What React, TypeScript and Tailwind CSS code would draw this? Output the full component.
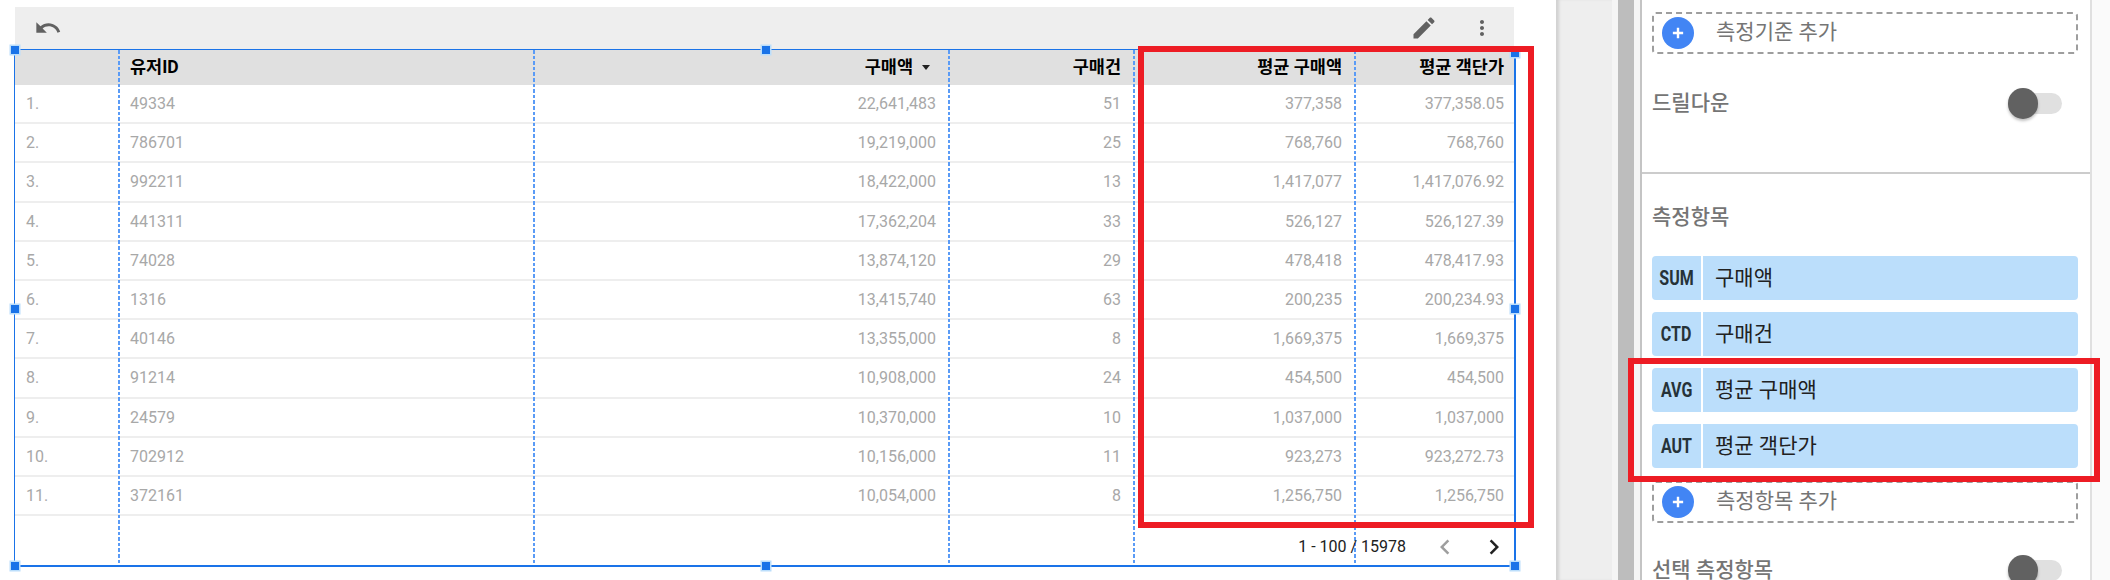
const COLUMNS = [
  { label: "", width: "w-[105px]", align: "left", pad: "pl-[11px]", values: ["1.", "2.", "3.", "4.", "5.", "6.", "7.", "8.", "9.", "10.", "11."] },
  { label: "유저ID", width: "w-[415px]", align: "left", pad: "pl-[10px]", values: ["49334", "786701", "992211", "441311", "74028", "1316", "40146", "91214", "24579", "702912", "372161"] },
  { label: "구매액", width: "w-[415px]", align: "right", pad: "pr-[14px]", sorted: true, values: ["22,641,483", "19,219,000", "18,422,000", "17,362,204", "13,874,120", "13,415,740", "13,355,000", "10,908,000", "10,370,000", "10,156,000", "10,054,000"] },
  { label: "구매건", width: "w-[185px]", align: "right", pad: "pr-[14px]", values: ["51", "25", "13", "33", "29", "63", "8", "24", "10", "11", "8"] },
  { label: "평균 구매액", width: "w-[221px]", align: "right", pad: "pr-[14px]", values: ["377,358", "768,760", "1,417,077", "526,127", "478,418", "200,235", "1,669,375", "454,500", "1,037,000", "923,273", "1,256,750"] },
  { label: "평균 객단가", width: "w-[158px]", align: "right", pad: "pr-[10px]", last: true, values: ["377,358.05", "768,760", "1,417,076.92", "526,127.39", "478,417.93", "200,234.93", "1,669,375", "454,500", "1,037,000", "923,272.73", "1,256,750"] },
];

const METRICS = [
  { agg: "SUM", name: "구매액" },
  { agg: "CTD", name: "구매건" },
  { agg: "AVG", name: "평균 구매액" },
  { agg: "AUT", name: "평균 객단가" },
];

function MaterialIcon({ d, size, className }: { d: string; size: number; className?: string }) {
  return (
    <svg viewBox="0 0 24 24" width={size} height={size} className={className} fill="currentColor">
      <path d={d} />
    </svg>
  );
}

function Handle({ className }: { className: string }) {
  return <div className={`absolute h-[8px] w-[8px] bg-[#1a73e8] shadow-[0_0_0_1.5px_#bbdefb] ${className}`} />;
}

function Toggle() {
  return (
    <div className="relative h-[21px] w-[39px] rounded-full bg-[#e0e0e0]">
      <div className="absolute left-[-15px] top-[-5px] h-[31px] w-[30px] rounded-full bg-[#616161] shadow-[0_2px_3px_rgba(0,0,0,0.25)]" />
    </div>
  );
}

function AddBox({ label, className }: { label: string; className: string }) {
  return (
    <div className={`flex h-[42px] items-center rounded-[4px] border-2 border-dashed border-[#9e9e9e] pl-[8px] ${className}`}>
      <div className="flex h-[32px] w-[32px] items-center justify-center rounded-full bg-[#4285f4]">
        <svg viewBox="0 0 14 14" width={12} height={12} fill="none" stroke="white" strokeWidth="2.8">
          <path d="M7 1v12M1 7h12" />
        </svg>
      </div>
      <span className="ml-[22px] pb-[2px] text-[21px] leading-[30px] text-[#757575]">{label}</span>
    </div>
  );
}

export default function App() {
  return (
    <div className="flex h-[580px] w-[2110px] overflow-hidden bg-white font-['Roboto','Noto_Sans_CJK_KR',sans-serif]">
      {/* report canvas */}
      <div className="relative w-[1556px] shrink-0 pl-[14px] pt-[7px]">
        <div className="ml-[1px] flex h-[42px] w-[1499px] items-center justify-between bg-[#eeeeee] pl-[19px] pr-[20px] text-[#616161]">
          <MaterialIcon size={28} d="M12.5 8c-2.65 0-5.05.99-6.9 2.6L2 7v9h9l-3.62-3.62c1.39-1.16 3.16-1.88 5.12-1.88 3.54 0 6.55 2.31 7.6 5.5l2.37-.78C21.08 11.03 17.15 8 12.5 8z" />
          <div className="flex items-center gap-[32px]">
            <MaterialIcon size={28} d="M3 17.25V21h3.75L17.81 9.94l-3.75-3.75L3 17.25zM20.71 7.04c.39-.39.39-1.02 0-1.41l-2.34-2.34c-.39-.39-1.02-.39-1.41 0l-1.83 1.83 3.75 3.75 1.83-1.83z" />
            <MaterialIcon size={24} d="M12 8c1.1 0 2-.9 2-2s-.9-2-2-2-2 .9-2 2 .9 2 2 2zm0 2c-1.1 0-2 .9-2 2s.9 2 2 2 2-.9 2-2-.9-2-2-2zm0 6c-1.1 0-2 .9-2 2s.9 2 2 2 2-.9 2-2-.9-2-2-2z" />
          </div>
        </div>

        <div className="relative flex h-[518px] w-[1502px] border-b-2 border-l border-r-2 border-t border-[#1a73e8]">
          {COLUMNS.map((col) => (
            <div key={col.label} className={`${col.width} relative h-full shrink-0`}>
              <div
                className={`flex h-[35px] items-center bg-[#e0e0e0] text-[17.5px] font-bold text-black ${col.sorted ? "pr-[20px]" : col.pad} ${col.align === "right" ? "justify-end" : ""}`}
              >
                {col.label}
                {col.sorted && (
                  <svg viewBox="0 0 8 5" width={8} height={5} className="ml-[9px]">
                    <path d="M0 0h8L4 5z" fill="#212121" />
                  </svg>
                )}
              </div>
              {col.values.map((value, i) => (
                <div
                  key={i}
                  className={`flex h-[39.2px] items-center border-b-2 border-[#eeeeee] pt-[1px] text-[16px] text-[#a8a8a8] ${col.pad} ${col.align === "right" ? "justify-end" : ""}`}
                >
                  {value}
                </div>
              ))}
              {/* dashed resize guide on the column edge */}
              {!col.last && (
                <div className="absolute bottom-0 right-0 top-0 w-[2px] bg-[repeating-linear-gradient(to_bottom,#5a9bf6_0,#5a9bf6_3.6px,transparent_3.6px,transparent_5.6px)]" />
              )}
            </div>
          ))}

          {/* pagination */}
          <div className="absolute bottom-[3px] right-[5px] flex items-center text-[16px] text-[#212121]">
            <span className="mr-[24px]">1 - 100 / 15978</span>
            <MaterialIcon size={30} className="text-[#9e9e9e]" d="M15.41 7.41L14 6l-6 6 6 6 1.41-1.41L10.83 12z" />
            <MaterialIcon size={30} className="ml-[19px] text-[#212121]" d="M10 6L8.59 7.41 13.17 12l-4.58 4.59L10 18l6-6z" />
          </div>

          <Handle className="left-[-4px] top-[-4px]" />
          <Handle className="left-[747px] top-[-4px]" />
          <Handle className="right-[-5px] top-[-1px]" />
          <Handle className="left-[-4px] top-[255px]" />
          <Handle className="right-[-5px] top-[255px]" />
          <Handle className="bottom-[-5px] left-[-4px]" />
          <Handle className="bottom-[-5px] left-[747px]" />
          <Handle className="bottom-[-5px] right-[-5px]" />
        </div>

        {/* annotation over the average columns */}
        <div className="absolute left-[1138px] top-[46px] h-[482px] w-[396px] border-[6px] border-[#ed1c24]" />
      </div>

      {/* gutter between canvas and properties panel */}
      <div className="w-[56px] shrink-0 bg-[#eeeeee] shadow-[inset_4px_0_3px_-1px_rgba(0,0,0,0.12)]" />
      <div className="w-[6px] shrink-0 bg-[#f5f5f5]" />
      <div className="w-[16px] shrink-0 bg-[#bdbdbd]" />
      <div className="w-[6px] shrink-0 bg-[#f5f5f5]" />

      {/* properties panel */}
      <div className="relative w-[452px] shrink-0 border-l-2 border-r-2 border-l-[#c4c4c4] border-r-[#e0e0e0]">
        <div className="pl-[10px] pr-[12px] pt-[12px]">
          <AddBox label="측정기준 추가" className="" />
          <div className="mt-[34px] flex h-[30px] items-center justify-between pr-[16px]">
            <span className="text-[21px] font-medium leading-[30px] text-[#757575]">드릴다운</span>
            <Toggle />
          </div>
        </div>

        <div className="mt-[54px] border-t-2 border-[#cccccc]" />

        <div className="pl-[10px] pr-[12px]">
          <div className="pt-[28px] text-[21px] font-medium leading-[30px] text-[#757575]">측정항목</div>
          <div className="mt-[24px] flex flex-col gap-[12px]">
            {METRICS.map((m) => (
              <div key={m.agg} className="flex h-[44px] overflow-hidden rounded-[4px] bg-[#bbdefb]">
                <div className="flex w-[51px] shrink-0 items-center justify-center border-r-2 border-white">
                  <span className="inline-block scale-x-[0.8] text-[20px] font-bold text-[#263238]">{m.agg}</span>
                </div>
                <span className="ml-[12px] self-center text-[21px] leading-[30px] text-[#212121]">{m.name}</span>
              </div>
            ))}
          </div>
          <AddBox label="측정항목 추가" className="mt-[13px]" />
          <div className="mt-[32px] flex h-[30px] items-center justify-between pr-[16px]">
            <span className="whitespace-nowrap text-[21px] font-medium leading-[30px] text-[#757575]">선택 측정항목</span>
            <Toggle />
          </div>
        </div>

        {/* annotation over the average metrics */}
        <div className="absolute left-[-14px] top-[358px] h-[124px] w-[472px] border-[6px] border-[#ed1c24]" />
      </div>

      <div className="flex-1 bg-[#fafafa]" />
    </div>
  );
}
